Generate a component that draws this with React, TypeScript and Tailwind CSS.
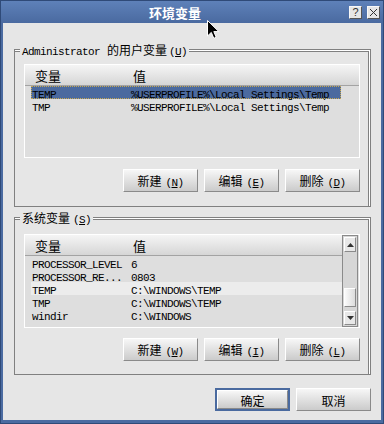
import React from "react";

const MONO = "font-['Liberation_Mono','Noto_Sans_CJK_SC',monospace]";
const CJK = "font-['Noto_Sans_CJK_SC',sans-serif]";

function Lat({ children }: { children: React.ReactNode }) {
  return <span className={`${MONO} text-[11px] tracking-[-0.6px]`}>{children}</span>;
}
function Han({ children }: { children: React.ReactNode }) {
  return <span className={`${CJK} text-[12px]`}>{children}</span>;
}

function Btn({ zh, k, def }: { zh: string; k?: string; def?: boolean }) {
  const inner = (
    <div className="w-full h-full flex items-center justify-center border border-t-white border-l-white border-b-[#8a8a8a] border-r-[#8a8a8a] bg-gradient-to-b from-[#f7f7f7] to-[#cbcbcb] text-black leading-none">
      <span className="leading-none">
        <Han>{zh}</Han>
        {k && (
          <span className="ml-[4px]">
            <Lat>
              (<span className="underline">{k}</span>)
            </Lat>
          </span>
        )}
      </span>
    </div>
  );
  if (def)
    return <div className="w-[75px] h-[23px] border-2 border-[#4a6a9f]">{inner}</div>;
  return <div className="w-[75px] h-[23px]">{inner}</div>;
}

function Group({
  label,
  children,
  className,
}: {
  label: React.ReactNode;
  children: React.ReactNode;
  className?: string;
}) {
  return (
    <div
      className={
        "relative border border-[#808080] shadow-[inset_-1px_1px_0_#ffffff,inset_-2px_2px_0_#808080] " +
        (className ?? "")
      }
    >
      <div className="absolute left-[5px] top-[-8px] h-[14px] px-[2px] bg-[#e6e6e6] flex items-center whitespace-nowrap">
        <span className="leading-none">{label}</span>
      </div>
      {children}
    </div>
  );
}

function Header() {
  return (
    <div className="h-[21px] shrink-0 border-b border-[#a3a3a3] bg-gradient-to-b from-[#f5f5f5] to-[#d6d6d6] flex items-center pl-[10px] leading-none">
      <div className="w-[98px]">
        <span className={`${CJK} text-[13px]`}>变量</span>
      </div>
      <div>
        <span className={`${CJK} text-[13px]`}>值</span>
      </div>
    </div>
  );
}

function Row({
  name,
  value,
  sel,
  hover,
}: {
  name: string;
  value: string;
  sel?: boolean;
  hover?: boolean;
}) {
  const bg = sel
    ? "bg-[#4b6a9f] outline outline-1 outline-dotted outline-[#c8a850] -outline-offset-1 w-[310px]"
    : hover
    ? "bg-[#ececec]"
    : "";
  return (
    <div className={`h-[13px] flex items-center pl-[1px] leading-none text-black ${bg}`}>
      <div className="w-[99px] whitespace-nowrap">
        <Lat>{name}</Lat>
      </div>
      <div className="whitespace-nowrap">
        <Lat>{value}</Lat>
      </div>
    </div>
  );
}

function Tri({ up }: { up?: boolean }) {
  return (
    <svg width="7" height="4" viewBox="0 0 7 4">
      {up ? <path d="M0 4 L3.5 0 L7 4 Z" fill="#333" /> : <path d="M0 0 L3.5 4 L7 0 Z" fill="#333" />}
    </svg>
  );
}

function Scrollbar() {
  return (
    <div className="w-[16px] mr-[1px] border border-[#8a8a8a] bg-[#d6d6d6] p-[1px] flex flex-col">
      <div className="h-[15px] shrink-0 border border-t-white border-l-white border-b-[#8a8a8a] border-r-[#8a8a8a] bg-[#e8e8e8] flex items-center justify-center">
        <Tri up />
      </div>
      <div className="flex-1" />
      <div className="h-[19px] shrink-0 border border-t-white border-l-white border-b-[#8a8a8a] border-r-[#8a8a8a] bg-gradient-to-r from-[#fafafa] to-[#dcdcdc]" />
      <div className="h-[4px] shrink-0" />
      <div className="h-[14px] shrink-0 border border-t-white border-l-white border-b-[#8a8a8a] border-r-[#8a8a8a] bg-[#e8e8e8] flex items-center justify-center">
        <Tri />
      </div>
    </div>
  );
}

export default function App() {
  return (
    <div className="relative w-[384px] h-[424px] bg-[#4b6ba1] border border-[#2f4a78] flex flex-col">
      {/* title bar */}
      <div className="h-[22px] shrink-0 flex items-start bg-gradient-to-b from-[#5e81b9] to-[#4a6aa0] pr-[3px]">
        <div className="flex-1 h-[22px] flex items-center justify-center">
          <span className={`${CJK} text-[13px] font-bold text-white leading-none`}>环境变量</span>
        </div>
        <div className="flex gap-[5px] pt-[5px]">
          <div className="w-[13px] h-[13px] bg-[#e6e6e6] border border-t-[#f8f8f8] border-l-[#f8f8f8] border-b-[#555] border-r-[#555] flex items-center justify-center">
            <span className="font-['Liberation_Sans',sans-serif] text-[11px] leading-none text-[#333]">?</span>
          </div>
          <div className="w-[13px] h-[13px] bg-[#e6e6e6] border border-t-[#f8f8f8] border-l-[#f8f8f8] border-b-[#555] border-r-[#555] flex items-center justify-center">
            <svg width="9" height="9" viewBox="0 0 9 9">
              <path d="M1 1 L8 8 M8 1 L1 8" stroke="#333" strokeWidth="1" />
            </svg>
          </div>
        </div>
      </div>

      {/* client */}
      <div className="flex-1 mx-[2px] mb-[3px] bg-[#e6e6e6] flex flex-col pt-[26px] pl-[11px] pr-[10px]">
        <Group
          className="h-[158px] pt-[14px] pl-[9px] pr-[10px] flex flex-col"
          label={
            <>
              <Lat>Administrator</Lat>
              <span className="ml-[7px]">
                <Han>的用户变量</Han>
              </span>
              <span className="ml-[2px]">
                <Lat>
                  (<span className="underline">U</span>)
                </Lat>
              </span>
            </>
          }
        >
          <div className="h-[94px] shrink-0 border border-white bg-[#dedede] flex flex-col">
            <Header />
            <div className="pl-[6px]">
              <Row name="TEMP" value="%USERPROFILE%\Local Settings\Temp" sel />
              <Row name="TMP" value="%USERPROFILE%\Local Settings\Temp" />
            </div>
          </div>
          <div className="mt-[11px] flex justify-end gap-[6px]">
            <Btn zh="新建" k="N" />
            <Btn zh="编辑" k="E" />
            <Btn zh="删除" k="D" />
          </div>
        </Group>

        <Group
          className="mt-[10px] h-[158px] pt-[16px] pl-[9px] pr-[10px] flex flex-col"
          label={
            <>
              <Han>系统变量</Han>
              <span className="ml-[3px]">
                <Lat>
                  (<span className="underline">S</span>)
                </Lat>
              </span>
            </>
          }
        >
          <div className="h-[94px] shrink-0 border border-white bg-[#dedede] flex">
            <div className="flex-1 flex flex-col">
              <Header />
              <div className="pl-[6px]">
                <Row name="PROCESSOR_LEVEL" value="6" />
                <Row name="PROCESSOR_RE..." value="0803" />
                <Row name="TEMP" value="C:\WINDOWS\TEMP" hover />
                <Row name="TMP" value="C:\WINDOWS\TEMP" />
                <Row name="windir" value="C:\WINDOWS" />
              </div>
            </div>
            <Scrollbar />
          </div>
          <div className="mt-[10px] flex justify-end gap-[6px]">
            <Btn zh="新建" k="W" />
            <Btn zh="编辑" k="I" />
            <Btn zh="删除" k="L" />
          </div>
        </Group>

        <div className="mt-[13px] flex justify-end gap-[6px]">
          <Btn zh="确定" def />
          <Btn zh="取消" />
        </div>
      </div>

      {/* mouse cursor */}
      <svg className="absolute left-[206px] top-[19px]" width="13" height="20" viewBox="0 0 13 20">
        <path
          d="M0.5 0.5 L0.5 16 L4.3 12.4 L6.8 18.3 L9.2 17.3 L6.8 11.6 L11.8 11.6 Z"
          fill="#000"
          stroke="#fff"
          strokeWidth="1"
        />
      </svg>
    </div>
  );
}
